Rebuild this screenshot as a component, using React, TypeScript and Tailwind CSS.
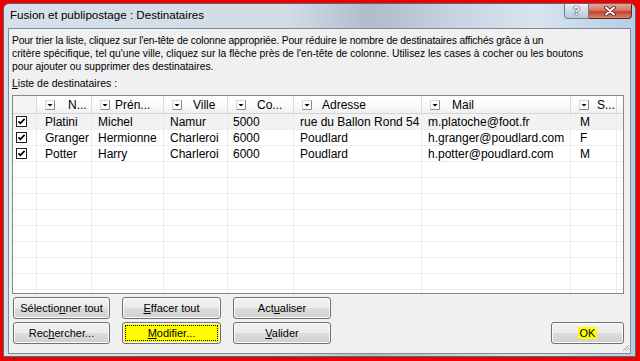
import React from 'react'

const grid = 'grid grid-cols-[24px_55px_72px_64px_66px_128px_149px_46px_1fr]'

const columns = [
	{ label: 'N...', text: 'ml-[13px]', cell: 'pl-[8px]' },
	{ label: 'Prén...', text: 'ml-[5px]', cell: 'pl-[6px]' },
	{ label: 'Ville', text: 'ml-[11px]', cell: 'pl-[6px]' },
	{ label: 'Co...', text: 'ml-[11px]', cell: 'pl-[5px]' },
	{ label: 'Adresse', text: 'ml-[10px]', cell: 'pl-[6px]' },
	{ label: 'Mail', text: 'ml-[12px]', cell: 'pl-[6px]' },
	{ label: 'S...', text: 'ml-[8px]', cell: 'pl-[9px]' },
]

const recipients = [
	['Platini', 'Michel', 'Namur', '5000', 'rue du Ballon Rond 54', 'm.platoche@foot.fr', 'M'],
	['Granger', 'Hermionne', 'Charleroi', '6000', 'Poudlard', 'h.granger@poudlard.com', 'F'],
	['Potter', 'Harry', 'Charleroi', '6000', 'Poudlard', 'h.potter@poudlard.com', 'M'],
]

const emptyRows = Array.from({ length: 9 })

function DropArrow() {
	return (
		<svg width="10" height="10" viewBox="0 0 10 10" className="ml-[8px] shrink-0">
			<rect x="0.5" y="0.5" width="9" height="9" fill="#fdfdfd" stroke="#d8d8d8" />
			<path d="M9.5 0.5V9.5H0.5" fill="none" stroke="#8a8a8a" />
			<path d="M2.5 4H7.5L5 6.5Z" fill="#000" />
		</svg>
	)
}

function CheckBox() {
	return (
		<svg width="11" height="11" viewBox="0 0 11 11">
			<rect x="0.5" y="0.5" width="10" height="10" fill="#fff" stroke="#1e1e1e" />
			<path d="M2.5 5.3L4.4 7.3L8.6 2.9" fill="none" stroke="#000" strokeWidth="1.7" />
		</svg>
	)
}

function Btn({ children, className = '' }: { children: React.ReactNode; className?: string }) {
	return (
		<div
			className={`flex h-[22px] items-center justify-center rounded-[3px] border border-[#707070] text-[11px] text-black shadow-[inset_0_0_0_1px_#fbfbfb] ${className}`}
		>
			{children}
		</div>
	)
}

const btnBg = 'bg-[linear-gradient(#f2f2f2,#ebebeb_48%,#dddddd_52%,#cfcfcf)]'

export default function App() {
	return (
		<div className="h-[361px] w-[640px] overflow-hidden bg-[#ee0000] pb-[4px] pl-[3px] pr-[4px] pt-[3px] font-['Segoe_UI','Liberation_Sans',Arial,sans-serif]">
			<div className="flex h-full flex-col rounded-t-[6px] border border-[#56697d] bg-[linear-gradient(90deg,#d6e0ea_0%,#d2dce7_45%,#aebccb_58%,#c7d4e2_72%,#d9e4ee_84%,#b5cde6_100%)]">
				{/* title bar */}
				<div className="flex h-[24px] shrink-0 items-start justify-between">
					<div className="pl-[6px] pt-[4px] text-[11.6px] leading-[14px] text-black">Fusion et publipostage : Destinataires</div>
					<div className="mr-[3px] flex">
						<div className="flex h-[15px] w-[25px] items-center justify-center rounded-bl-[4px] border border-t-0 border-[#6c7c8c] bg-gradient-to-b from-[#e8eef5] via-[#cfdae6] to-[#b9c8d8]">
							<span className="text-[12px] font-bold leading-[12px] text-white [text-shadow:0_0_1px_#2b3a4a,0_0_1px_#2b3a4a,0_0_1px_#2b3a4a]">?</span>
						</div>
						<div className="flex h-[15px] w-[43px] items-center justify-center rounded-br-[4px] border border-l-0 border-t-0 border-[#5a2a24] bg-[linear-gradient(#e6a596,#d27766_45%,#c2412b_55%,#d9866e)]">
							<svg width="14" height="10" viewBox="0 0 14 10">
								<path d="M3 1.5L11 8.5M11 1.5L3 8.5" stroke="#4a1b14" strokeWidth="3.6" strokeLinecap="round" />
								<path d="M3 1.5L11 8.5M11 1.5L3 8.5" stroke="#fff" strokeWidth="2" strokeLinecap="round" />
							</svg>
						</div>
					</div>
				</div>

				{/* client area */}
				<div className="mx-[4px] mb-[3px] flex flex-1 flex-col border border-[#7f8b97] bg-[#f0f0f0] pl-[3px] pr-[6px] pt-[5px] text-black">
					<div className="whitespace-nowrap text-[10.3px] leading-[13px]">
						<div className="tracking-[-0.15px]">Pour trier la liste, cliquez sur l'en-tête de colonne appropriée. Pour réduire le nombre de destinataires affichés grâce à un</div>
						<div>critère spécifique, tel qu'une ville, cliquez sur la flèche près de l'en-tête de colonne. Utilisez les cases à cocher ou les boutons</div>
						<div>pour ajouter ou supprimer des destinataires.</div>
					</div>
					<div className="mt-[4px] text-[10.5px] leading-[13px]">
						<u>L</u>iste de destinataires :
					</div>

					{/* recipients list */}
					<div className="mt-[5px] h-[199px] w-[612px] overflow-hidden border border-[#828790] bg-white text-[12px] leading-[16px]">
						<div className={`${grid} h-[18px] border-b border-[#d5d5d5] bg-gradient-to-b from-white via-[#fafbfb] to-[#eff0f2]`}>
							<div className="border-r border-[#dcdcdc] bg-[#f4f4f4]" />
							{columns.map((c) => (
								<div key={c.label} className="flex items-center overflow-hidden whitespace-nowrap border-r border-[#dcdcdc]">
									<DropArrow />
									<span className={c.text}>{c.label}</span>
								</div>
							))}
							<div />
						</div>
						{recipients.map((r, i) => (
							<div key={r[0]} className={`${grid} h-[16px] border-b border-[#ececec] ${i === 0 ? 'bg-[#f2f2f2]' : ''}`}>
								<div className="border-r border-[#ececec] pl-[3px] pt-[2px]">
									<CheckBox />
								</div>
								{r.map((v, j) => (
									<div key={j} className={`overflow-hidden whitespace-nowrap border-r border-[#ececec] ${columns[j].cell}`}>
										{v}
									</div>
								))}
								<div />
							</div>
						))}
						{emptyRows.map((_, i) => (
							<div key={i} className={`${grid} h-[16px] border-b border-[#ececec]`}>
								<div className="border-r border-[#ececec]" />
								{columns.map((c) => (
									<div key={c.label} className="border-r border-[#ececec]" />
								))}
								<div />
							</div>
						))}
					</div>

					{/* buttons */}
					<div className="mt-[3px] flex items-end justify-between pl-px">
						<div className="grid grid-cols-[97px_99px_98px] gap-x-[12px] gap-y-[3px]">
							<Btn className={btnBg}>
								<span>
									Sélectio<u>n</u>ner tout
								</span>
							</Btn>
							<Btn className={btnBg}>
								<span>
									<u>E</u>ffacer tout
								</span>
							</Btn>
							<Btn className={btnBg}>
								<span>
									Act<u>u</u>aliser
								</span>
							</Btn>
							<Btn className={btnBg}>
								<span>
									Rec<u>h</u>ercher...
								</span>
							</Btn>
							<Btn className="border-[#262626] bg-[#ffff00] p-[2px]">
								<span className="flex h-full w-full items-center justify-center border border-dotted border-black">
									<span>
										<u>M</u>odifier...
									</span>
								</span>
							</Btn>
							<Btn className={btnBg}>
								<span>
									<u>V</u>alider
								</span>
							</Btn>
						</div>
						<Btn className={`w-[73px] ${btnBg}`}>
							<span className="bg-[#ffff00] px-[2px] leading-[12px]">OK</span>
						</Btn>
					</div>

					{/* size grip */}
					<div className="mt-auto flex justify-end">
						<svg width="8" height="8" viewBox="0 0 8 8" className="-mr-[6px] mb-px">
							<path d="M7 1L1 7M7 4L4 7" stroke="#a0a0a0" strokeWidth="1" />
						</svg>
					</div>
				</div>
			</div>
		</div>
	)
}
